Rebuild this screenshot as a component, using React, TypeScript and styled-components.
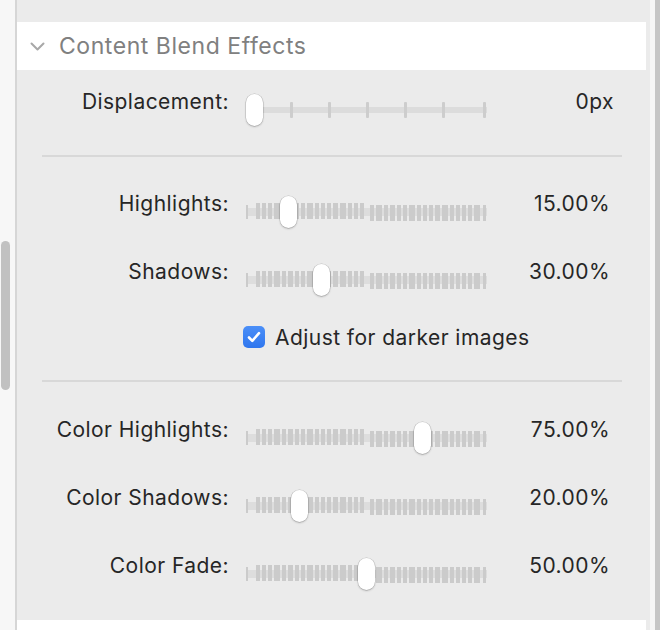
import React from 'react'
import styled, { createGlobalStyle } from 'styled-components'

const GlobalStyle = createGlobalStyle`
  html, body {
    margin: 0;
    padding: 0;
    background: #ebebeb;
  }
  body {
    font-family: Inter, "Liberation Sans", sans-serif;
    -webkit-font-smoothing: antialiased;
  }
`

const Page = styled.div`
  display: flex;
  height: 630px;
  overflow: hidden;
`

const Gutter = styled.div`
  flex: none;
  width: 15px;
  padding-top: 241px;
  background: #f7f7f7;
  border-right: 2px solid #d6d6d6;
`

const ScrollThumb = styled.div`
  width: 9px;
  height: 149px;
  margin-left: 1px;
  border-radius: 5px;
  background: #c1c1c1;
`

const Panel = styled.div`
  flex: 1;
  display: flex;
  flex-direction: column;
  padding-top: 22px;
  background: #ebebeb;
`

const RightEdge = styled.div`
  flex: none;
  width: 5px;
  background: #f6f6f6;
  border-right: 5px solid #c6c6c6;
`

const Header = styled.div`
  flex: none;
  display: flex;
  align-items: center;
  gap: 14px;
  height: 48px;
  margin-right: 4px;
  padding-left: 13px;
  background: #fff;
  font-size: 23px;
  letter-spacing: 0.55px;
  color: #808080;
`

const Section = styled.div<{ $pad: string }>`
  display: flex;
  flex-direction: column;
  gap: 32px;
  padding: ${(p) => p.$pad};
`

const Row = styled.div`
  display: grid;
  grid-template-columns: 212px 241px 1fr;
  column-gap: 17px;
  align-items: center;
  height: 36px;
  padding-right: 40px;
  font-size: 21px;
  letter-spacing: 0.45px;
  color: #262626;
`

const Label = styled.div`
  padding-bottom: 6px;
  text-align: right;
  white-space: nowrap;
`

const Value = styled.div<{ $shift?: number }>`
  padding-bottom: 6px;
  margin-right: ${(p) => -(p.$shift || 0)}px;
  text-align: right;
  white-space: nowrap;
`

const Separator = styled.div`
  flex: none;
  height: 2px;
  margin: 0 28px 0 25px;
  background: #d8d8d8;
`

const SliderBox = styled.div`
  position: relative;
  width: 241px;
  height: 32px;
  margin-top: 11px;
  svg {
    display: block;
  }
`

const Thumb = styled.div`
  position: absolute;
  top: 0;
  width: 17px;
  height: 32px;
  border-radius: 9px;
  background: #fff;
  box-shadow: 0 0 0 0.5px rgba(0, 0, 0, 0.18), 0 1px 2px rgba(0, 0, 0, 0.22);
`

const CheckRow = styled.label`
  grid-column: 2 / 4;
  display: flex;
  align-items: center;
  gap: 10px;
  margin-left: -3px;
  padding-bottom: 2px;
  white-space: nowrap;
`

const CheckBox = styled.span`
  display: flex;
  align-items: center;
  justify-content: center;
  width: 22px;
  height: 22px;
  border-radius: 5px;
  background: linear-gradient(#4b8ff8, #2f76ee);
`

const Footer = styled.div`
  flex: 1;
  margin-right: 4px;
  background: #fff;
`

const TRACK_W = 241
const THUMB_W = 17

const Chevron = () => (
  <svg width="15" height="9" viewBox="0 0 15 9">
    <path d="M1.5 1.5 L7.5 7.5 L13.5 1.5" fill="none" stroke="#a8a8a8" strokeWidth="2" strokeLinecap="round" strokeLinejoin="round" />
  </svg>
)

const TickTrack = () => {
  const ticks = [6, 44, 82, 120, 158, 196, 237]
  return (
    <svg width={TRACK_W} height="32">
      <rect x="0" y="13" width={TRACK_W} height="6" fill="#dcdcdc" />
      {ticks.map((x) => (
        <rect key={x} x={x} y="8" width="3" height="16" rx="1" fill="#cdcdcd" />
      ))}
    </svg>
  )
}

// histogram-like bar strip behind the tone sliders
const makeBars = (start: number, end: number, seed: number) => {
  const bars: { x: number; w: number }[] = []
  let x = start
  let i = seed
  while (x < end) {
    const w = i % 5 === 3 ? 6 : i % 7 === 5 ? 5 : 4
    if (x + w > end) break
    bars.push({ x, w })
    x += w + 2
    i++
  }
  return bars
}

const leftBars = makeBars(10, 122, 0)
const rightBars = makeBars(124, 236, 2)

const BarTrack = () => (
  <svg width={TRACK_W} height="32">
    <rect x="0" y="12" width={TRACK_W} height="8" fill="#dddddd" />
    <rect x="0" y="9" width="2" height="14" fill="#cbcbcb" />
    {leftBars.map((b) => (
      <rect key={'l' + b.x} x={b.x} y="7" width={b.w} height="16" fill="#cbcbcb" />
    ))}
    {rightBars.map((b) => (
      <rect key={'r' + b.x} x={b.x} y="9" width={b.w} height="16" fill="#cbcbcb" />
    ))}
    <rect x="237" y="9" width="3" height="16" fill="#cbcbcb" />
  </svg>
)

const Slider = ({ value, ticks }: { value: number; ticks?: boolean }) => (
  <SliderBox>
    {ticks ? <TickTrack /> : <BarTrack />}
    <Thumb style={{ left: value * (TRACK_W - THUMB_W) }} />
  </SliderBox>
)

type RowProps = { label: string; value: number; text: string; ticks?: boolean; shift?: number }

const SliderRow = ({ label, value, text, ticks, shift }: RowProps) => (
  <Row>
    <Label>{label}</Label>
    <Slider value={value} ticks={ticks} />
    <Value $shift={shift}>{text}</Value>
  </Row>
)

export default function App() {
  return (
    <>
      <GlobalStyle />
      <Page>
        <Gutter>
          <ScrollThumb />
        </Gutter>
        <Panel>
          <Header>
            <Chevron />
            <span>Content Blend Effects</span>
          </Header>
          <Section $pad="13px 0 36px">
            <SliderRow label="Displacement:" value={0} text="0px" ticks shift={4} />
          </Section>
          <Separator />
          <Section $pad="28px 0 24px">
            <SliderRow label="Highlights:" value={0.15} text="15.00%" />
            <SliderRow label="Shadows:" value={0.3} text="30.00%" />
            <Row style={{ marginTop: -1 }}>
              <CheckRow>
                <CheckBox>
                  <svg width="14" height="12" viewBox="0 0 14 12">
                    <path d="M2 6.5 L5.3 9.8 L12 2.2" fill="none" stroke="#fff" strokeWidth="2.6" strokeLinecap="round" strokeLinejoin="round" />
                  </svg>
                </CheckBox>
                Adjust for darker images
              </CheckRow>
            </Row>
          </Section>
          <Separator />
          <Section $pad="29px 0 37px">
            <SliderRow label="Color Highlights:" value={0.75} text="75.00%" />
            <SliderRow label="Color Shadows:" value={0.2} text="20.00%" />
            <SliderRow label="Color Fade:" value={0.5} text="50.00%" />
          </Section>
          <Footer />
        </Panel>
        <RightEdge />
      </Page>
    </>
  )
}
